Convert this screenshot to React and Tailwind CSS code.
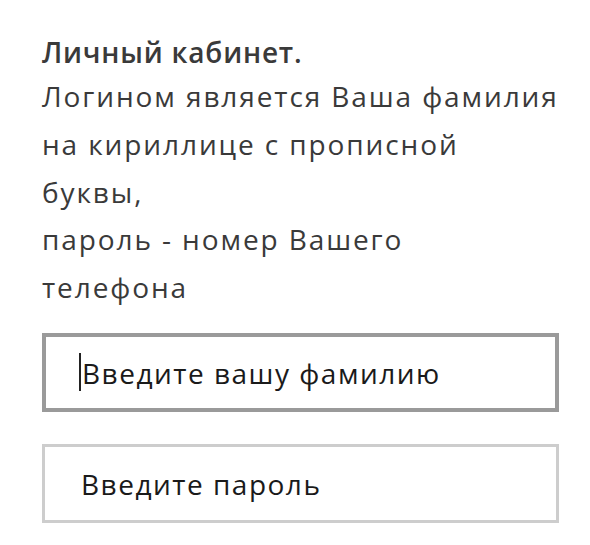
import React from 'react';

function Field({ placeholder, active }) {
    return (
        <div className={`flex items-center h-[79px] pl-[33px] bg-white ${active ? 'border-[4px] border-[#9a9a9a]' : 'border-[3px] border-[#cdcdcd]'}`}>
            {active && <span className="w-[2px] h-[38px] bg-[#222] mr-[1px]" />}
            <span className={`text-[28px] text-[#1a1a1a] leading-none tracking-[1.5px] pt-[2px] ${active ? '' : 'pl-[3px]'}`}>{placeholder}</span>
        </div>
    );
}

export default function App() {
    return (
        <div className="w-[590px] h-[545px] bg-white pl-[42px] pr-[31px] pt-[32px] text-[#3a3a3a]" style={{ fontFamily: '"Open Sans", "Noto Sans", sans-serif' }}>
            <p className="text-[28px] font-semibold leading-[40px] tracking-[0.8px]">Личный кабинет.</p>
            <p className="text-[28px] leading-[47.8px] mt-[1px] tracking-[1.9px]">
                Логином является Ваша фамилия<br />
                на кириллице с прописной<br />
                буквы,<br />
                пароль - номер Вашего<br />
                телефона
            </p>
            <div className="mt-[21px] flex flex-col gap-[32px]">
                <Field placeholder="Введите вашу фамилию" active />
                <Field placeholder="Введите пароль" />
            </div>
        </div>
    );
}
